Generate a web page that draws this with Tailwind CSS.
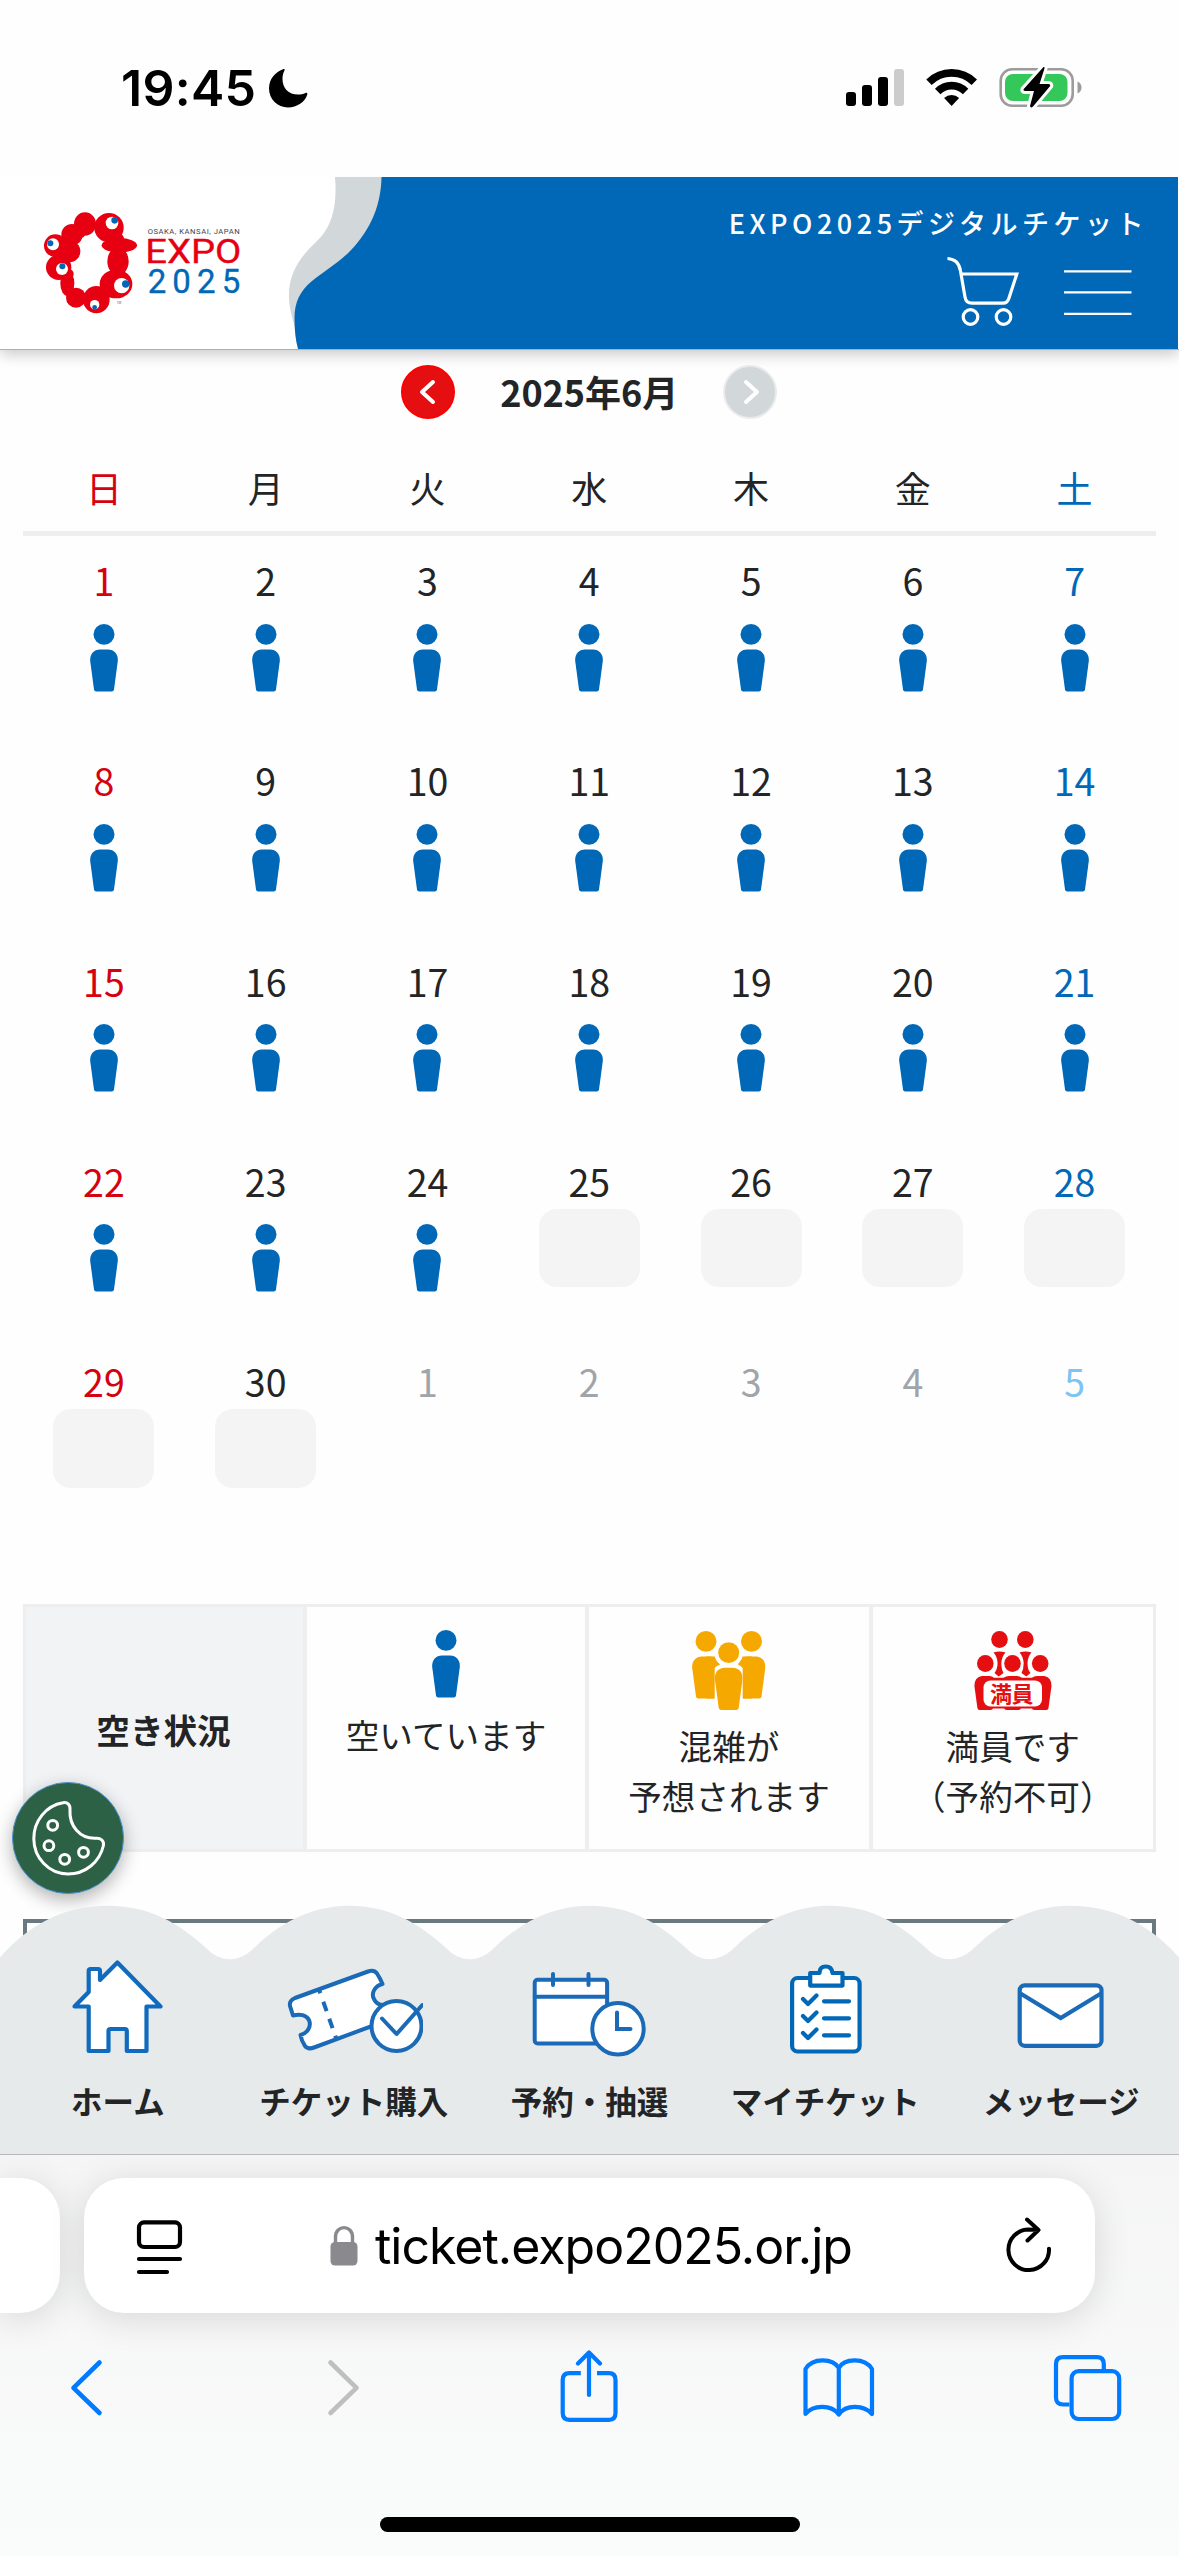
<!DOCTYPE html>
<html lang="ja">
<head>
    <meta charset="UTF-8">
    <meta name="viewport" content="width=device-width, initial-scale=1.0">
    <title>EXPO2025デジタルチケット</title>
    <script src="https://cdn.jsdelivr.net/npm/@tailwindcss/browser@4"></script>
</head>
<body class="relative w-[1179px] h-[2556px] overflow-hidden flex flex-col bg-[#fefefe] text-[#222426] font-['Noto_Sans_CJK_JP',sans-serif]">

    <!-- shared symbols -->
    <svg class="hidden">
        <symbol id="person" viewBox="0 0 28 68">
            <ellipse cx="14" cy="10.4" rx="10.5" ry="10.4"/>
            <path d="M10 25.5H18C24.5 25.5 28.3 30.5 27.8 37L24 65.5Q23.7 67.6 21.8 67.6H6.2Q4.3 67.6 4 65.5L.2 37C-.3 30.5 3.5 25.5 10 25.5Z"/>
        </symbol>
    </svg>

    <!-- status bar -->
    <div class="relative z-20 bg-[#fefefe] h-[177px] shrink-0 flex items-start justify-between pl-[121px] pr-[96px] pt-[62px] text-black font-['Inter',sans-serif]">
        <div class="flex items-center gap-[12px] h-[52px]">
            <span class="text-[50px] leading-[52px] font-semibold tracking-[0.3px]">19:45</span>
            <svg width="40" height="40" viewBox="0 0 40 40"><path d="M15.5 1C8 3.5 1 10.500 1 20.500C1 31 9.500 39.500 20 39.500C29 39.500 37 34 39.300 26.500C39.600 25 38.600 24.500 37.500 25C35 26.200 32.500 26.600 30 26.600C20.500 26.600 14.500 20 14.500 11C14.500 8 15 5.300 16.500 2.500C17 1.300 16.500 .7 15.500 1Z"/></svg>
        </div>
        <svg class="mt-[3px]" width="237" height="46" viewBox="846 65 237 46">
            <rect x="846" y="92" width="10" height="14" rx="3"/>
            <rect x="862" y="85" width="10" height="21" rx="3"/>
            <rect x="878" y="77" width="10" height="29" rx="3"/>
            <rect x="894" y="69" width="10" height="37" rx="3" fill="#ccc"/>
            <g fill="none" stroke="#000" stroke-width="7.600">
                <path d="M929 82.300A32 32 0 0 1 974.300 82.300"/>
                <path d="M937.700 91.500A19.500 19.500 0 0 1 965.600 91.500"/>
            </g>
            <path d="M951.600 106L944.100 98A11 11 0 0 1 959.100 98Z"/>
            <rect x="1000.700" y="69.200" width="72" height="36.600" rx="11.500" fill="none" stroke="#9c9c9c" stroke-width="2.600"/>
            <rect x="1005" y="74" width="62.500" height="27" rx="8" fill="#34c759"/>
            <path d="M1077.500 81.500C1080 82.500 1081.500 84.800 1081.500 87.500S1080 92.500 1077.500 93.500Z" fill="#9c9c9c"/>
            <path d="M1043.500 67L1023.500 89.200Q1023 91 1025 91H1034L1030 106Q1030.500 108.500 1033 106.500L1050.200 86Q1050.500 84 1048.500 84H1039.500L1044.500 68.500Q1045 66.500 1043.500 67Z" stroke="#fff" stroke-width="6" paint-order="stroke"/>
        </svg>
    </div>

    <!-- site header -->
    <header class="relative z-10 h-[172.500px] shrink-0 flex justify-between bg-white shadow-[0_4px_14px_rgba(0,0,0,0.22)] border-b border-[#8fb9dc]">
        <svg class="absolute inset-0" width="1179" height="172" viewBox="0 177 1179 172">
            <path d="M335 177C337 202 334 227 315 243C298 259 289 275 289 295C289 308 292 318 296 330L400 330V177Z" fill="#d2d7da"/>
            <path d="M381.500 177C381 205 371 226 358 242C344 260 328 268 312 281C300 291 294.500 302 294.500 318C294.500 330 295.500 340 298 349H1178V177Z" fill="#0068b7"/>
        </svg>
        <svg class="relative ml-[30px] mt-[23px]" width="230" height="125" viewBox="0 0 690 375">
            <g fill="#e60012">
                <ellipse cx="165" cy="72" rx="33" ry="35"/><circle cx="237" cy="83" r="44"/>
                <ellipse cx="268" cy="136" rx="53" ry="22"/><ellipse cx="264" cy="184" rx="32" ry="42"/>
                <ellipse cx="258" cy="252" rx="49" ry="43"/><ellipse cx="199" cy="299" rx="40" ry="41"/>
                <circle cx="138" cy="293" r="30"/><ellipse cx="112" cy="250" rx="21" ry="38"/>
                <ellipse cx="86" cy="202" rx="38" ry="38"/><circle cx="118" cy="154" r="33"/>
                <circle cx="76" cy="137" r="34"/><circle cx="126" cy="104" r="32"/>
                <circle cx="262" cy="118" r="20"/><circle cx="152" cy="100" r="14"/><circle cx="116" cy="222" r="15"/>
            </g>
            <g fill="#fff">
                <circle cx="246" cy="69" r="19"/><circle cx="275" cy="257" r="23"/><circle cx="194" cy="314" r="14"/>
                <circle cx="96" cy="207" r="18"/><circle cx="69" cy="133" r="18"/>
            </g>
            <g fill="#0068b7">
                <circle cx="254" cy="61" r="10"/><circle cx="287" cy="252" r="11"/><circle cx="194" cy="322" r="7"/>
                <circle cx="97" cy="199" r="9"/><circle cx="61" cy="130" r="9"/>
            </g>
            <g font-family="Roboto, sans-serif">
                <text x="353" y="101" font-size="23" fill="#444" textLength="276">OSAKA, KANSAI, JAPAN</text>
                <text x="346" y="190" font-size="101" fill="#e60012" stroke="#e60012" stroke-width="1" textLength="288" lengthAdjust="spacingAndGlyphs">EXPO</text>
                <text x="353" y="279" font-size="99" fill="#0068b7" stroke="#0068b7" stroke-width="1" textLength="278">2025</text>
                <text x="260" y="312" font-size="9" fill="#666">TM</text>
            </g>
        </svg>
        <div class="relative flex flex-col items-end pt-[26px] pr-[31px]">
            <p class="text-white text-[27px] leading-[40px] font-medium tracking-[4.5px]">EXPO2025デジタルチケット</p>
            <div class="flex pr-[15px] pt-[13px]">
                <svg width="188" height="72" viewBox="946 256 188 72" fill="none" stroke="#fff" stroke-width="3.200">
                    <path d="M948.500 258.500C957 259 960.500 264 961.500 271L966 297Q967 303.200 973 303.200H1004Q1008.500 303.200 1010 298L1017.800 274H962"/>
                    <circle cx="971.500" cy="317" r="7.300"/><circle cx="1004.500" cy="317" r="7.300"/>
                    <path d="M1065 271.300H1132.500M1065 292.300H1132.500M1065 313.900H1132.500" stroke-width="2.300"/>
                </svg>
            </div>
        </div>
    </header>

    <main class="h-[1804.500px] shrink-0 pl-[23px] pt-[14.500px] pr-[23.500px] overflow-hidden">
        <!-- month switcher -->
        <div class="flex items-center justify-center h-[55px] gap-[45px]">
            <button class="size-[54px] rounded-full bg-[#e50f12] border-2 border-[#ff0000] flex items-center justify-center">
                <svg width="20" height="28" viewBox="0 0 20 28" fill="none" stroke="#fff" stroke-width="4" stroke-linecap="round" stroke-linejoin="round"><path d="M15 4L4 14L15 24"/></svg>
            </button>
            <h2 class="text-[36px] leading-[54px] font-bold whitespace-nowrap -mt-[1px]">2025年6月</h2>
            <button class="size-[54px] rounded-full bg-[#d2d7da] border-2 border-[#ebebeb] flex items-center justify-center">
                <svg width="20" height="28" viewBox="0 0 20 28" fill="none" stroke="#fff" stroke-width="4" stroke-linecap="round" stroke-linejoin="round"><path d="M6 4L17 14L6 24"/></svg>
            </button>
        </div>

        <div class="grid grid-cols-7 text-center text-[36px] leading-[54px] pt-[41px] pb-[17px] border-b-5 border-[#eee]">
            <span class="text-[#d7000f]">日</span><span>月</span><span>火</span><span>水</span><span>木</span><span>金</span><span class="text-[#0068b7]">土</span>
        </div>
        <div id="calendar" class="grid grid-cols-7 auto-rows-[200.300px]"></div>

        <!-- legend -->
        <div class="mt-[66.500px] h-[248px] grid grid-cols-[281px_282px_284px_283.500px] text-[33.600px] leading-[50px] text-center border border-[#eee]">
            <div class="bg-[#f2f3f5] border-2 border-[#eee] flex items-center justify-center font-bold pt-[4px] pr-[2px]">空き状況</div>
            <div class="border-2 border-[#eee] flex flex-col items-center pt-[23px]">
                <svg width="28" height="68" class="fill-[#0068b7]"><use href="#person"/></svg>
                <p class="mt-[12px]">空いています</p>
            </div>
            <div class="border-2 border-[#eee] flex flex-col items-center pt-[24px]">
                <svg width="74" height="80" viewBox="0 0 74 80" fill="#f5a800">
                    <use href="#person" x="0" y="0" width="28" height="68"/>
                    <use href="#person" x="45.500" y="0" width="28" height="68"/>
                    <rect x="14" y="25.500" width="14" height="42" /><rect x="46" y="25.500" width="14" height="42"/>
                    <use href="#person" x="22.700" y="11.300" width="28" height="68" stroke="#fefefe" stroke-width="8"/>
                    <use href="#person" x="22.700" y="11.300" width="28" height="68"/>
                </svg>
                <p class="mt-[10px]">混雑が<br>予想されます</p>
            </div>
            <div class="border-2 border-[#eee] flex flex-col items-center pt-[24px]">
                <svg width="78" height="80" viewBox="0 0 78 80" fill="#e50f12">
                    <ellipse cx="25.500" cy="8.500" rx="8.300" ry="8.400"/><ellipse cx="51.300" cy="8.500" rx="8.300" ry="8.400"/>
                    <path d="M19.500 21.500Q25.500 19.500 31.500 21.500Q28 25 27.300 32Q27.500 39 29.500 42L24.700 45.500L20.500 42Q23.500 38 23.600 32Q23 25 19.500 21.500ZM45.500 21.500Q51.500 19.500 57.500 21.500Q54 25 53.500 32Q53.500 39 56.500 42L52.300 45.500L47.500 42Q49.700 38 49.700 32Q49 25 45.500 21.500Z"/>
                    <ellipse cx="11.300" cy="32.500" rx="8.300" ry="8.400"/><ellipse cx="38.500" cy="32.500" rx="8.300" ry="8.400"/><ellipse cx="66.200" cy="32.500" rx="8.300" ry="8.400"/>
                    <path d="M8 45H15.500Q18 45 20 46.800H29.500Q32 45 35 45H43Q45.500 45 48 46.800H58Q60 45 63 45H70Q77.500 46 77.500 55L74.500 77Q74 79 72.500 79H61Q58.500 79 58 77.500H47Q46 79 44 79H33Q31.500 79 30 77.500H19Q18 79 16 79H5.500Q3.800 79 3.400 77L.4 55Q.4 46 8 45Z"/>
                    <rect x="9.500" y="49.500" width="58.500" height="26" rx="7" fill="#fff"/>
                    <text x="16" y="71" font-size="22" font-weight="700" textLength="43.500">満員</text>
                </svg>
                <p class="mt-[10px]">満員です<br>（予約不可）</p>
            </div>
        </div>

        <div class="mt-[67px] h-[400px] border-[4.500px] border-[#6a7880]"></div>
    </main>

    <!-- cookie settings -->
    <button class="absolute left-[12px] top-[1782px] size-[112px] rounded-full bg-[#2c6145] border border-[#4d93cf] shadow-[0_6px_18px_rgba(0,0,0,0.3)] z-10">
        <svg width="110" height="110" viewBox="13 1783 110 110" fill="none" stroke="#fff" stroke-width="3">
            <path d="M63 1802.700C67.500 1801.800 70.500 1805 70 1810C69 1826 80 1838.500 95 1838.300C101 1837.500 104.500 1841 103.300 1846C99.500 1862 85.500 1874 68 1874C49 1874 33.800 1858 33.800 1838.500C33.800 1821 46 1805.500 63 1802.700Z"/>
            <circle cx="52.700" cy="1825.300" r="4.900"/><circle cx="48.900" cy="1845.700" r="4.900"/><circle cx="64.700" cy="1859.300" r="4.900"/><circle cx="83.500" cy="1852.300" r="4.900"/>
        </svg>
    </button>

    <!-- site bottom navigation, lies over the page -->
    <nav class="absolute left-0 top-[1905px] w-full h-[249px] z-10">
        <svg class="absolute inset-0" width="1179" height="249" viewBox="0 1905 1179 249">
            <path fill="#e6eaeb" d="M0 2154V1957.500C28 1925 64 1905.700 107.500 1905.700C148 1905.700 178 1922 206 1948C213 1955 221 1959.300 230 1959.300S246 1955 253 1949C277 1925 310 1905.700 349 1905.700S418 1922 446 1948C453 1955 461 1959.300 470 1959.300S486 1955 493 1949C517 1925 550 1905.700 589.500 1905.700S658 1922 686 1948C693 1955 701 1959.300 709.500 1959.300S726 1955 733 1949C757 1925 790 1905.700 829.500 1905.700S898 1922 926 1948C933 1955 941 1959.300 949.500 1959.300S966 1955 973 1949C997 1925 1030 1905.700 1070 1905.700C1114 1905.700 1151 1925 1179 1957.500V2154Z"/>
        </svg>
        <div class="relative grid grid-cols-5 pt-[51px] text-[31.500px] leading-[46px] font-bold text-center">
            <a class="flex flex-col items-center">
                <svg width="96" height="100" viewBox="70 1956 96 100" fill="#fff" stroke="#106bbf" stroke-width="4.200" stroke-linejoin="round">
                    <path d="M117.400 1962.500L160.500 2006.500H146.500V2051H126.800V2031Q126.800 2029 124.800 2029H110.500Q108.500 2029 108.500 2031V2051H88.700V2006.500H74.500L88.700 1992V1971Q88.700 1969 90.700 1969H98Q100 1969 100 1971V1980Z"/>
                </svg>
                <span class="mt-[21px]">ホーム</span>
            </a>
            <a class="flex flex-col items-center">
                <svg width="138" height="100" viewBox="285 1956 138 100" fill="#fff" stroke="#1a6ab8" stroke-width="4" stroke-linejoin="round">
                    <path d="M295 1998L368 1971.500Q374 1969.500 377 1973.500Q380 1978 382.500 1984C374.500 1986 371.500 1993 373.500 1998C375.500 2003.500 379 2005.500 385 2005L391 2019L314 2047.500Q308 2049.800 305 2046Q301.500 2041 300.500 2035C308 2033 311.500 2026 309 2020C306.500 2015 300 2013.500 293 2015.500L290 2006Q289 2000.500 295 1998Z"/>
                    <path d="M319 1989.500L336 2038" stroke-dasharray="4 9 10 8 10 8 6 20"/>
                    <circle cx="396.500" cy="2026" r="25"/>
                    <path d="M382 2018.500L396.600 2034L422.300 2005" fill="none" stroke-linecap="round"/>
                </svg>
                <span class="mt-[21px]">チケット購入</span>
            </a>
            <a class="flex flex-col items-center">
                <svg width="116" height="104" viewBox="531.500 1956 116 104" fill="#fff" stroke="#1a6ab8" stroke-width="4" stroke-linecap="round">
                    <rect x="535.200" y="1979.700" width="72.400" height="63.800" rx="3"/>
                    <path d="M535.200 1996.700H607.600M553.500 1974V1985M589 1974V1985"/>
                    <circle cx="618.500" cy="2028.800" r="25.700"/>
                    <path d="M617.500 2012.500V2029H631" fill="none"/>
                </svg>
                <span class="mt-[17px]">予約・抽選</span>
            </a>
            <a class="flex flex-col items-center">
                <svg width="76" height="100" viewBox="787.500 1956 76 100" fill="#fff" stroke="#0068b7" stroke-width="4.200" stroke-linejoin="round">
                    <rect x="792.600" y="1978" width="67.500" height="73.500" rx="5.500"/>
                    <path d="M810.700 1973H820C820 1968.500 822 1966.500 826.300 1966.500S832.500 1968.500 833 1973H843V1985.600H810.700Z"/>
                    <path d="M803.500 1999L808.500 2004L817 1995.500M803.500 2016L808.500 2021L817 2012.500M803.500 2033L808.500 2038L817 2029.500M824.500 2001.300H849.500M824.500 2018.300H849.500M824.500 2035.300H849.500" fill="none" stroke-linecap="round"/>
                </svg>
                <span class="mt-[21px]">マイチケット</span>
            </a>
            <a class="flex flex-col items-center">
                <svg width="90" height="100" viewBox="1016.500 1956 90 100" fill="#fff" stroke="#1a6ab8" stroke-width="4.200">
                    <rect x="1020.200" y="1985.300" width="81.800" height="60.500" rx="5"/>
                    <path d="M1021 1993.500L1061.200 2018L1101.500 1993.500" fill="none"/>
                </svg>
                <span class="mt-[21px]">メッセージ</span>
            </a>
        </div>
    </nav>

    <!-- browser toolbar -->
    <footer class="relative z-20 flex-1 bg-linear-to-b from-[#f5f5f5] to-[#fafbfb] border-t border-[#b6b8ba] font-['Inter',sans-serif] text-black overflow-hidden">
        <div class="flex gap-[24px] pt-[23px] h-[158px]">
            <div class="w-[60px] h-[135px] shrink-0 rounded-r-[40px] bg-white shadow-[0_6px_36px_rgba(0,0,0,0.13)]"></div>
            <div class="relative w-[1011px] h-[135px] rounded-[40px] bg-white shadow-[0_6px_36px_rgba(0,0,0,0.13)] flex items-center justify-between pl-[51px] pr-[41px]">
                <svg width="50" height="58" viewBox="135 2216 50 58" fill="none" stroke="#000" stroke-width="4.200" stroke-linecap="round">
                    <rect x="139" y="2221.400" width="41" height="24.600" rx="5"/><path d="M139 2258H180M139 2271H167"/>
                </svg>
                <div class="flex items-center pr-[7px] gap-[17px]">
                    <svg width="28" height="42" viewBox="329.500 2224 28 42"><rect x="330" y="2241" width="27" height="23.500" rx="4.500" fill="#8a8a8e"/><path d="M335 2242V2236C335 2223.500 352 2223.500 352 2236V2242" fill="none" stroke="#8a8a8e" stroke-width="3.400"/></svg>
                    <span class="text-[50px] leading-[60px] tracking-[-1px]">ticket.expo2025.or.jp</span>
                </div>
                <svg width="50" height="64" viewBox="1005 2213 50 64" fill="none" stroke="#000" stroke-width="4" stroke-linecap="round" stroke-linejoin="round">
                    <path d="M1050 2247.700A20.300 20.300 0 1 1 1029.500 2228.500L1039.500 2229M1028 2218.500L1039.500 2229L1028.500 2239.500"/>
                </svg>
            </div>
        </div>
        <div class="flex items-center h-[150px] pl-[68px] text-[#007aff]">
            <svg width="38" height="60" viewBox="68 2358 38 60" fill="none" stroke="currentColor" stroke-width="4.600" stroke-linecap="round" stroke-linejoin="round"><path d="M99.500 2362.500L73.500 2387.800L99.500 2413"/></svg>
            <svg class="ml-[219px]" width="38" height="60" viewBox="325 2358 38 60" fill="none" stroke="#bfbfbf" stroke-width="4.600" stroke-linecap="round" stroke-linejoin="round"><path d="M330.500 2362.500L356.500 2387.800L330.500 2413"/></svg>
            <svg class="ml-[196px]" width="60" height="76" viewBox="559.500 2350 60 76" fill="none" stroke="currentColor" stroke-width="4.200"><path d="M581.300 2373.200H570Q563.200 2373.200 563.200 2380V2413Q563.200 2419.800 570 2419.800H609.500Q616 2419.800 616 2413V2380Q616 2373.200 609.500 2373.200H597.500"/><path d="M589.500 2395V2353.500M578.500 2363.500L589.500 2352.500L600.500 2363.500" stroke-linecap="round" stroke-linejoin="round"/></svg>
            <svg class="ml-[183px]" width="74" height="64" viewBox="803 2356 74 64" fill="none" stroke="currentColor" stroke-width="4.200" stroke-linejoin="round"><path d="M839.800 2368C834 2358.500 814 2357 806.500 2369V2414C814 2405 832 2404 839.800 2414.500C847 2404 865 2405 873 2414V2369C865.500 2357 845 2358.500 839.800 2368V2414"/></svg>
            <svg class="ml-[176px]" width="72" height="72" viewBox="1054 2352 72 72" fill="none" stroke="currentColor" stroke-width="4.200"><path d="M1071.500 2404.500H1065Q1058 2404.500 1058 2397.500V2364Q1058 2357.200 1065 2357.200H1099Q1105.800 2357.200 1105.800 2364V2369"/><rect x="1073.600" y="2371.200" width="47.600" height="47.800" rx="7"/></svg>
        </div>
        <div class="mx-auto mt-[54px] w-[420px] h-[15px] rounded-full bg-black"></div>
    </footer>

    <script>
        const calendar = document.getElementById("calendar");
        const personIcon = `<svg width="28" height="68" class="mt-[17.500px] fill-[#0068b7]"><use href="#person"/></svg>`;
        const emptyBox = `<div class="mt-[2px] w-[101px] h-[78.500px] rounded-[18px] bg-[#f4f4f4]"></div>`;

        function dayColor(column, nextMonth) {
            if (nextMonth) {
                return column === 6 ? "text-[#7dc4f5]" : "text-[#9fa5aa]";
            }
            if (column === 0) return "text-[#d7000f]";
            if (column === 6) return "text-[#0068b7]";
            return "text-[#222426]";
        }

        for (let i = 0; i < 35; i++) {
            const nextMonth = i >= 30;
            const day = nextMonth ? i - 29 : i + 1;
            // open through the 24th, no data after that
            const mark = nextMonth ? "" : day <= 24 ? personIcon : emptyBox;
            calendar.innerHTML += `
                <div class="flex flex-col items-center pt-[18px]">
                    <span class="text-[37.500px] leading-[52px] ${dayColor(i % 7, nextMonth)}">${day}</span>
                    ${mark}
                </div>
            `;
        }
    </script>
</body>
</html>
